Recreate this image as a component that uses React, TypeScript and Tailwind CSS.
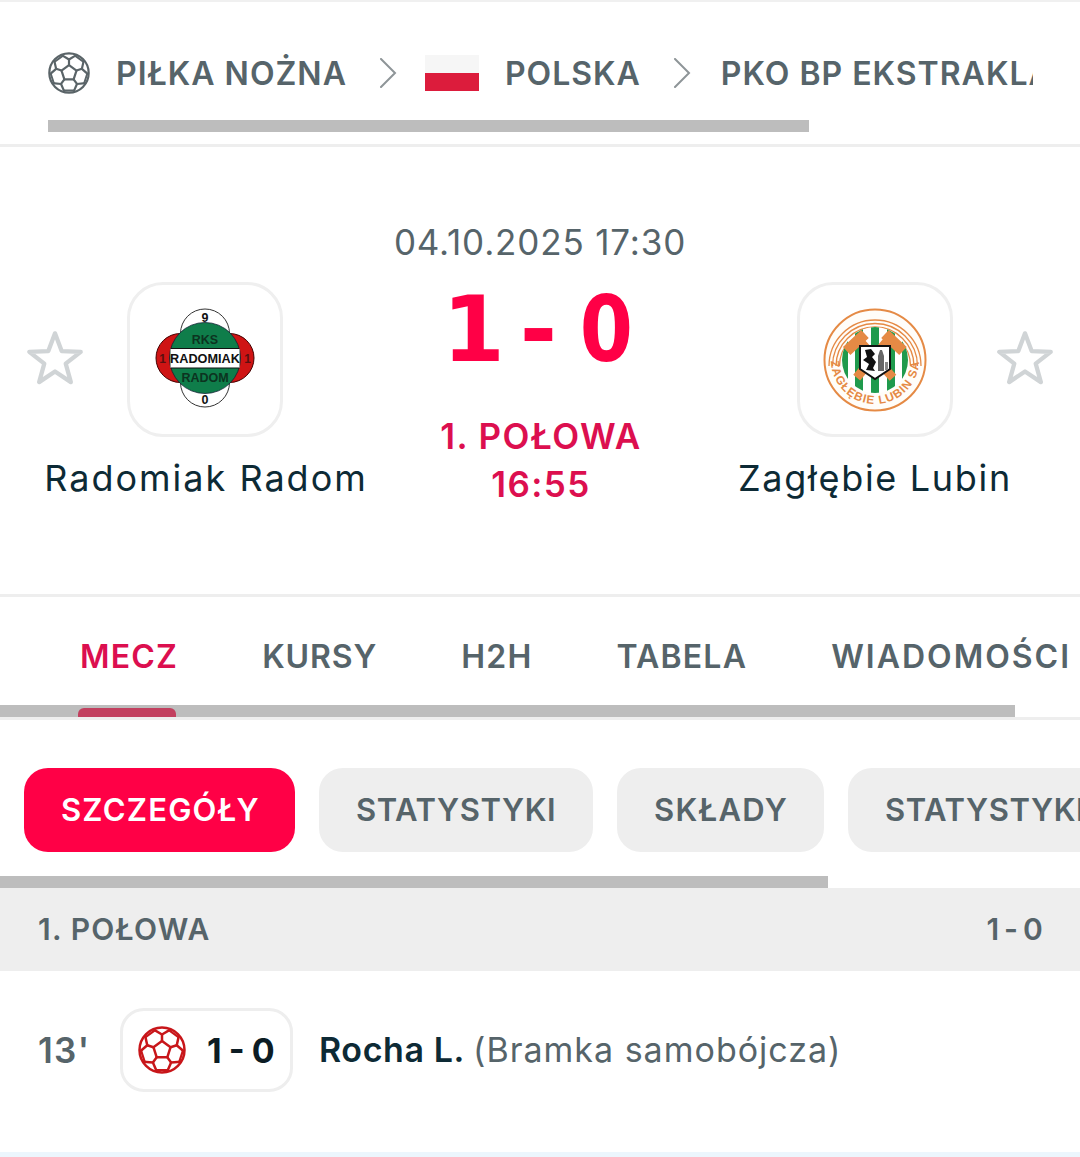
import React from "react";

const font = { fontFamily: '"Inter","Roboto",sans-serif' };

const polar = (r: number, deg: number) => {
  const a = (deg * Math.PI) / 180;
  return [24 + r * Math.cos(a), 24 + r * Math.sin(a)];
};
const pt = (p: number[]) => `${p[0].toFixed(2)} ${p[1].toFixed(2)}`;

function Ball({ size, color }: { size: number; color: string }) {
  const angles = [-90, -18, 54, 126, 198];
  const pent = "M" + angles.map((a) => pt(polar(9, a))).join("L") + "Z";
  const spokes = angles.map((a) => `M${pt(polar(9, a))}L${pt(polar(15.5, a))}`).join("");
  const vees = angles
    .map((a) => `M${pt(polar(22, a - 22))}L${pt(polar(15.5, a))}L${pt(polar(22, a + 22))}`)
    .join("");
  const links = angles
    .map((a) => `M${pt(polar(21, a + 19))}L${pt(polar(21, a + 53))}`)
    .join("");
  return (
    <svg width={size} height={size} viewBox="0 0 48 48" fill="none" stroke={color} strokeWidth="2.5" strokeLinejoin="round" className="shrink-0">
      <circle cx="24" cy="24" r="22.500" />
      <path d={pent} />
      <path d={spokes} />
      <path d={vees} />
      <path d={links} strokeWidth="2.2" />
    </svg>
  );
}

function Chevron() {
  return (
    <svg width="18" height="30" viewBox="0 0 18 30" fill="none" stroke="#8e9598" strokeWidth="2" strokeLinecap="round" className="shrink-0">
      <path d="M2 1 L16 15 L2 29" />
    </svg>
  );
}

function FavStar() {
  return (
    <svg width="60" height="60" viewBox="0 0 56 56" fill="none" stroke="#d0d4d6" strokeWidth="4" strokeLinejoin="round">
      <path d="M28 5 L34.200 21.500 L52 22.300 L38 33.300 L42.800 50.500 L28 40.600 L13.200 50.500 L18 33.300 L4 22.300 L21.800 21.500Z" />
    </svg>
  );
}

function RadomiakLogo() {
  const t = { fontFamily: '"Liberation Sans",sans-serif', fontWeight: 700 };
  return (
    <svg width="100" height="100" viewBox="0 0 100 100" className="-mt-[4px]">
      <circle cx="50" cy="25.500" r="24.500" fill="#fff" stroke="#333" strokeWidth="1" />
      <circle cx="50" cy="74.500" r="24.500" fill="#fff" stroke="#333" strokeWidth="1" />
      <circle cx="25.500" cy="50" r="24.500" fill="#cf1414" stroke="#400" strokeWidth="1" />
      <circle cx="74.500" cy="50" r="24.500" fill="#cf1414" stroke="#400" strokeWidth="1" />
      <circle cx="50" cy="50" r="35.500" fill="#0f7d4a" stroke="#123" strokeWidth="0.8" />
      <rect x="15.500" y="40.500" width="69" height="19.500" fill="#fff" />
      <path d="M15.500 40.500H84.500M15.500 60H84.500" stroke="#111" strokeWidth="1.200" />
      <text x="50" y="54.800" textAnchor="middle" fontSize="12.700" fill="#111" style={t}>RADOMIAK</text>
      <text x="50" y="35.500" textAnchor="middle" fontSize="12.500" fill="#0c3320" style={t}>RKS</text>
      <text x="50" y="73.500" textAnchor="middle" fontSize="12.500" fill="#0c3320" style={t}>RADOM</text>
      <text x="50" y="13.500" textAnchor="middle" fontSize="12.500" fill="#111" style={t}>9</text>
      <text x="50" y="96" textAnchor="middle" fontSize="12.500" fill="#111" style={t}>0</text>
      <text x="7.500" y="54.500" textAnchor="middle" fontSize="12" fill="#5c0f0f" style={t}>1</text>
      <text x="92.500" y="54.500" textAnchor="middle" fontSize="12" fill="#5c0f0f" style={t}>1</text>
    </svg>
  );
}

function ZaglebieLogo() {
  const o = "#e58a45";
  return (
    <svg width="104" height="104" viewBox="0 0 104 104">
      <defs>
        <clipPath id="zgInner"><circle cx="52" cy="52" r="33" /></clipPath>
      </defs>
      <circle cx="52" cy="52" r="50.500" fill="#fffdf9" stroke={o} strokeWidth="2" />
      <path d="M6 58A46 46 0 0 1 98 58M9.500 58A42.500 42.500 0 0 1 94.500 58M13 58A39 39 0 0 1 91 58M16.500 58A35.500 35.500 0 0 1 87.500 58" fill="none" stroke={o} strokeWidth="1.300" />
      <circle cx="52" cy="52" r="33" fill="#fff" />
      <g clipPath="url(#zgInner)">
        <path d="M18 19h7v66h-7zM32 19h8v66h-8zM48 19h8v66h-8zM64 19h8v66h-8zM79 19h7v66h-7z" fill="#1f9a4c" />
      </g>
      <path d="M33.700 69.700 L67 29.700 M70 69.700 L33.700 29.700" stroke={o} strokeWidth="9" />
      <path d="M23.700 43 L42 26 M80 43 L62 26" stroke={o} strokeWidth="11" />
      <path d="M37 38 H67 V61 L52 71 L37 61Z" fill="#fff" stroke="#111" strokeWidth="2" />
      <path d="M42 42 L48 41 L52 46 L49 49 L53 54 L50 60 L52 63 L43 62 L46 56 L40 52 L44 49Z" fill="#111" />
      <path d="M55 48 L57 42 L59 42 L61 48 L61 63 L55 63Z" fill="#666" />
      <path d="M62 54 H65 V62 H62Z" fill="#888" />
      <path id="zgText" d="M8 52A44 44 0 0 0 96 52" fill="none" />
      <text fontSize="11.800" fill={o} letterSpacing="1" style={{ fontFamily: '"Liberation Sans",sans-serif', fontWeight: 700 }}>
        <textPath href="#zgText" startOffset="50%" textAnchor="middle">ZAGŁĘBIE LUBIN SA</textPath>
      </text>
    </svg>
  );
}

function TeamColumn({ name, logo, side, track }: { name: string; logo: React.ReactNode; side: "l" | "r"; track: string }) {
  return (
    <div className="relative flex flex-col items-center pt-[62px]">
      <div className={`absolute top-[108px] ${side === "l" ? "left-[25px]" : "right-[25px]"}`}>
        <FavStar />
      </div>
      <div className="w-[156px] h-[155px] rounded-[36px] border-[3px] border-[#efefef] flex items-center justify-center">{logo}</div>
      <div className={`mt-[19px] text-[36px] leading-[44px] text-[#0d2a35] whitespace-nowrap ${track}`}>{name}</div>
    </div>
  );
}

function Pill({ label, active, w, track }: { label: string; active?: boolean; w: string; track: string }) {
  return (
    <div className={`shrink-0 h-[84px] ${w} rounded-[24px] flex items-center pl-[37px] text-[31px] font-semibold whitespace-nowrap ${track} ${active ? "bg-[#ff0046] text-white" : "bg-[#eeeeee] text-[#56646a]"}`}>
      {label}
    </div>
  );
}

export default function App() {
  return (
    <div className="w-[1080px] h-[1157px] overflow-hidden bg-white flex flex-col" style={font}>
      <div className="h-[2px] shrink-0 bg-[#f0f0f0]" />
      <div className="relative h-[145px] shrink-0 border-b-[3px] border-[#eeeeee]">
        <div className="flex items-center h-[142px] pl-[48px] w-[1033px] overflow-hidden text-[#56646a] text-[32px] font-semibold tracking-[1px] whitespace-nowrap">
          <Ball size={42} color="#5a6468" />
          <span className="ml-[26px] pt-[2px]">PIŁKA NOŻNA</span>
          <span className="ml-[32px] flex"><Chevron /></span>
          <span className="ml-[28px] w-[54px] h-[36px] shrink-0 flex flex-col">
            <span className="h-1/2 bg-[#f6f6f6]" />
            <span className="h-1/2 bg-[#dc1c3c]" />
          </span>
          <span className="ml-[26px] pt-[2px]">POLSKA</span>
          <span className="ml-[32px] flex"><Chevron /></span>
          <span className="ml-[30px] pt-[2px]">PKO BP EKSTRAKLASA</span>
        </div>
        <div className="absolute left-[48px] top-[118px] w-[761px] h-[12px] bg-[#bdbdbd]" />
      </div>

      <div className="h-[450px] shrink-0 border-b-[3px] border-[#eeeeee] grid grid-cols-[410px_260px_410px] pt-[73px]">
        <TeamColumn side="l" track="tracking-[2px] pl-[2px]" name="Radomiak Radom" logo={<RadomiakLogo />} />
        <div className="flex flex-col items-center">
          <div className="text-[35px] leading-[44px] text-[#56646a] tracking-[0.85px] whitespace-nowrap">04.10.2025 17:30</div>
          <div className="mt-[18px] h-[96px] flex items-center text-[#ff0046] text-[90px] font-bold leading-none" style={{ fontFamily: '"DejaVu Sans",sans-serif' }}>
            <span>1</span>
            <span className="ml-[15px]">-</span>
            <span className="ml-[18px] inline-block scale-x-[.85]">0</span>
          </div>
          <div className="mt-[34px] pl-[2px] text-[#dc0f4f] text-[35px] leading-[48px] font-semibold tracking-[1.4px] text-center whitespace-nowrap">
            1. POŁOWA
            <br />
            16:55
          </div>
        </div>
        <TeamColumn side="r" track="tracking-[1.700px]" name="Zagłębie Lubin" logo={<ZaglebieLogo />} />
      </div>

      <div className="relative h-[123px] shrink-0 border-b-[3px] border-[#eeeeee] overflow-hidden">
        <div className="flex items-center h-[118px] pl-[80px] pt-[2px] gap-[84px] text-[32px] font-semibold tracking-[1.2px] text-[#56646a] whitespace-nowrap">
          <span className="text-[#dc0f4f]">MECZ</span>
          <span className="tracking-[0.9px]">KURSY</span>
          <span>H2H</span>
          <span>TABELA</span>
          <span className="tracking-[2px]">WIADOMOŚCI</span>
        </div>
        <div className="absolute left-0 top-[108px] w-[1015px] h-[12px] bg-[#bdbdbd]" />
        <div className="absolute left-[78px] top-[111px] w-[98px] h-[9px] rounded-t-md bg-[#c2405f]" />
      </div>

      <div className="relative h-[168px] shrink-0 overflow-hidden">
        <div className="flex gap-[24px] pl-[24px] pt-[48px] whitespace-nowrap">
          <Pill w="w-[271px]" track="tracking-[1.2px]" label="SZCZEGÓŁY" active />
          <Pill w="w-[274px]" track="tracking-[0.6px]" label="STATYSTYKI" />
          <Pill w="w-[207px]" track="tracking-[1.3px]" label="SKŁADY" />
          <Pill w="w-[274px]" track="tracking-[0.6px]" label="STATYSTYKI" />
        </div>
        <div className="absolute left-0 top-[156px] w-[828px] h-[12px] bg-[#bdbdbd]" />
      </div>

      <div className="h-[83px] shrink-0 bg-[#eeeeee] flex items-center justify-between pl-[38px] pr-[36px] text-[#56646a] text-[30px] font-semibold tracking-[1.200px]">
        <span>1. POŁOWA</span>
        <span className="[word-spacing:-5px]">1 - 0</span>
      </div>

      <div className="h-[181px] shrink-0 flex items-start pt-[37px] pl-[38px]">
        <div className="w-[82px] h-[84px] flex items-center text-[35px] font-semibold text-[#56646a] tracking-[1.3px]">13'</div>
        <div className="w-[173px] h-[84px] rounded-[24px] border-[3px] border-[#eeeeee] flex items-center pl-[15px] gap-[21px]">
          <Ball size={48} color="#c8161a" />
          <span className="text-[34px] font-bold text-[#0c1c24] whitespace-nowrap [word-spacing:-1px]">1 - 0</span>
        </div>
        <div className="ml-[26px] h-[84px] pb-[2px] flex items-center text-[34px] whitespace-nowrap tracking-[0.6px]">
          <span className="font-semibold text-[#0d2a35]">Rocha L.</span>
          <span className="ml-[8px] text-[#56646a] tracking-[1px]">(Bramka samobójcza)</span>
        </div>
      </div>
      <div className="h-[5px] shrink-0 bg-[#ecf6fd]" />
    </div>
  );
}
